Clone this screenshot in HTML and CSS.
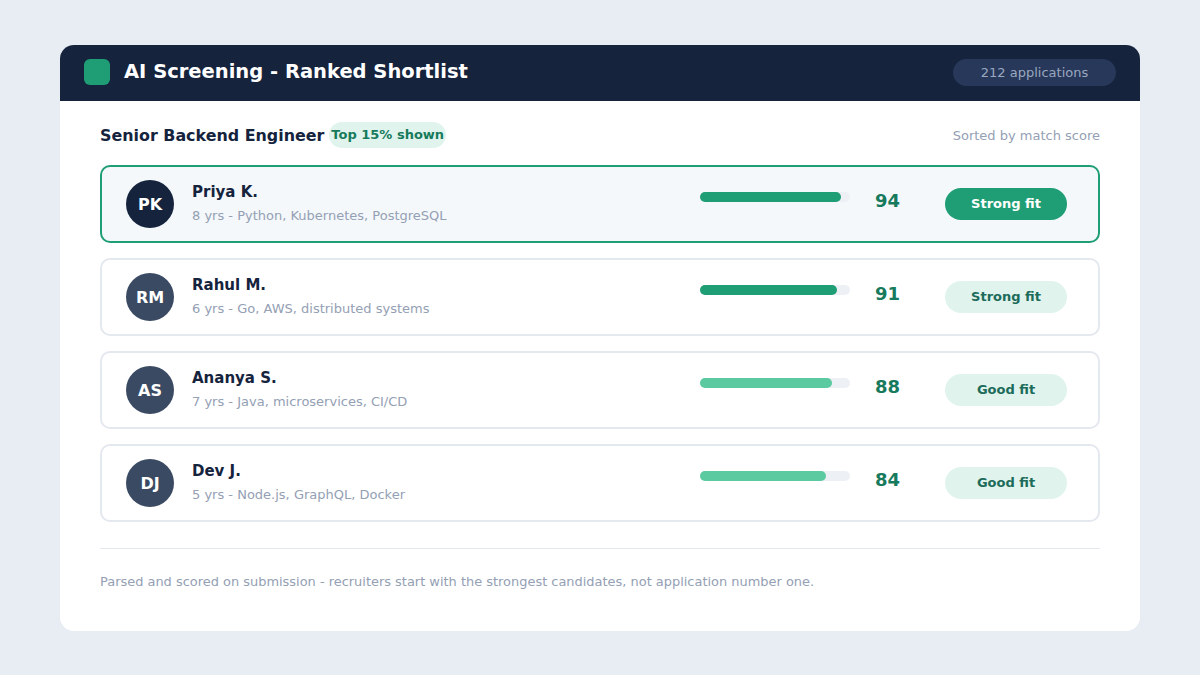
FILE: index.html
```html
<!DOCTYPE html>
<html lang="en">
  <head>
    <meta charset="UTF-8" />
    <meta name="viewport" content="width=device-width, initial-scale=1.0" />
    <title>AI Screening - Ranked Shortlist</title>
    <link rel="stylesheet" href="styles.css">
  </head>
  <body>
    <div class="card">
      <!-- Header bar -->
      <div class="header">
        <div class="logo"></div>
        <h1>AI Screening - Ranked Shortlist</h1>
        <div class="count">212 applications</div>
      </div>

      <div class="content">
        <div class="subhead">
          <h2>Senior Backend Engineer</h2>
          <span class="badge">Top 15% shown</span>
          <span class="sorted">Sorted by match score</span>
        </div>

        <!-- Candidate rows -->
        <div class="list">
          <div class="row top">
            <div class="avatar dark">PK</div>
            <div class="info">
              <div class="name">Priya K.</div>
              <div class="meta">8 yrs - Python, Kubernetes, PostgreSQL</div>
            </div>
            <div class="bar"><div class="fill strong" style="width: 94%"></div></div>
            <div class="score">94</div>
            <div class="fit solid">Strong fit</div>
          </div>

          <div class="row">
            <div class="avatar">RM</div>
            <div class="info">
              <div class="name">Rahul M.</div>
              <div class="meta">6 yrs - Go, AWS, distributed systems</div>
            </div>
            <div class="bar"><div class="fill strong" style="width: 91%"></div></div>
            <div class="score">91</div>
            <div class="fit">Strong fit</div>
          </div>

          <div class="row">
            <div class="avatar">AS</div>
            <div class="info">
              <div class="name">Ananya S.</div>
              <div class="meta">7 yrs - Java, microservices, CI/CD</div>
            </div>
            <div class="bar"><div class="fill good" style="width: 88%"></div></div>
            <div class="score">88</div>
            <div class="fit">Good fit</div>
          </div>

          <div class="row">
            <div class="avatar">DJ</div>
            <div class="info">
              <div class="name">Dev J.</div>
              <div class="meta">5 yrs - Node.js, GraphQL, Docker</div>
            </div>
            <div class="bar"><div class="fill good" style="width: 84%"></div></div>
            <div class="score">84</div>
            <div class="fit">Good fit</div>
          </div>
        </div>

        <div class="footer">
          Parsed and scored on submission - recruiters start with the strongest candidates, not application number one.
        </div>
      </div>
    </div>
  </body>
</html>
```

FILE: styles.css
```css
* {
  box-sizing: border-box;
}
body {
  font-family: "DejaVu Sans", sans-serif;
  background-color: #e8edf4;
  margin: 0;
  padding: 45px 60px;
}
.card {
  background-color: #ffffff;
  border-radius: 14px;
  overflow: hidden;
  width: 1080px;
}
.header {
  background-color: #15233d;
  height: 56px;
  display: flex;
  align-items: center;
  padding: 0 24px 2px;
}
.logo {
  width: 26px;
  height: 26px;
  border-radius: 6px;
  background-color: #1f9e75;
  margin-right: 14px;
}
h1 {
  margin: 0 0 2px;
  font-size: 19.5px;
  font-weight: 700;
  color: #ffffff;
  flex: 1;
}
.count {
  background-color: #28385a;
  color: #9aa8c0;
  font-size: 13px;
  border-radius: 14px;
  width: 163px;
  height: 27px;
  line-height: 27px;
  text-align: center;
}
.content {
  padding: 21px 40px 40px;
}
.subhead {
  display: flex;
  align-items: center;
  height: 26px;
  margin-bottom: 17px;
}
h2 {
  margin: 0 5px 0 0;
  font-size: 15.9px;
  font-weight: 700;
  color: #15233d;
}
.badge {
  background-color: #e0f4ed;
  color: #177a5c;
  font-size: 13px;
  font-weight: 700;
  border-radius: 13px;
  height: 26px;
  line-height: 26px;
  padding: 0 2px;
}
.sorted {
  margin-left: auto;
  font-size: 13px;
  color: #94a0b4;
}
.list {
  display: flex;
  flex-direction: column;
  gap: 15px;
}
.row {
  display: flex;
  align-items: center;
  height: 78px;
  border: 2px solid #e4e8ef;
  border-radius: 10px;
  padding: 0 31px 0 24px;
  background-color: #ffffff;
}
.row.top {
  border-color: #1f9e75;
  background-color: #f4f8fb;
}
.avatar {
  width: 48px;
  height: 48px;
  border-radius: 50%;
  background-color: #3b4a63;
  color: #ffffff;
  font-size: 16px;
  font-weight: 700;
  display: flex;
  align-items: center;
  justify-content: center;
  margin-right: 18px;
}
.avatar.dark {
  background-color: #15233d;
}
.info {
  flex: 1;
}
.name {
  font-size: 15px;
  font-weight: 700;
  color: #15233d;
  line-height: 20px;
  margin-bottom: 4px;
}
.meta {
  font-size: 13px;
  color: #94a0b4;
  line-height: 20px;
}
.bar {
  width: 150px;
  height: 10px;
  border-radius: 5px;
  background-color: #edf0f4;
  margin-bottom: 14px;
}
.fill {
  height: 100%;
  border-radius: 5px;
}
.fill.strong {
  background-color: #1f9e75;
}
.fill.good {
  background-color: #5ccaa0;
}
.score {
  width: 95px;
  padding-left: 25px;
  font-size: 18px;
  font-weight: 700;
  color: #177a5c;
  margin-bottom: 8px;
}
.fit {
  width: 122px;
  height: 32px;
  line-height: 32px;
  border-radius: 16px;
  text-align: center;
  font-size: 13px;
  font-weight: 700;
  background-color: #e0f4ed;
  color: #1d6b5a;
}
.fit.solid {
  background-color: #1f9e75;
  color: #ffffff;
}
.footer {
  border-top: 1px solid #e4e8ef;
  margin-top: 26px;
  padding-top: 24px;
  font-size: 12.95px;
  color: #94a0b4;
  line-height: 18px;
}
```
